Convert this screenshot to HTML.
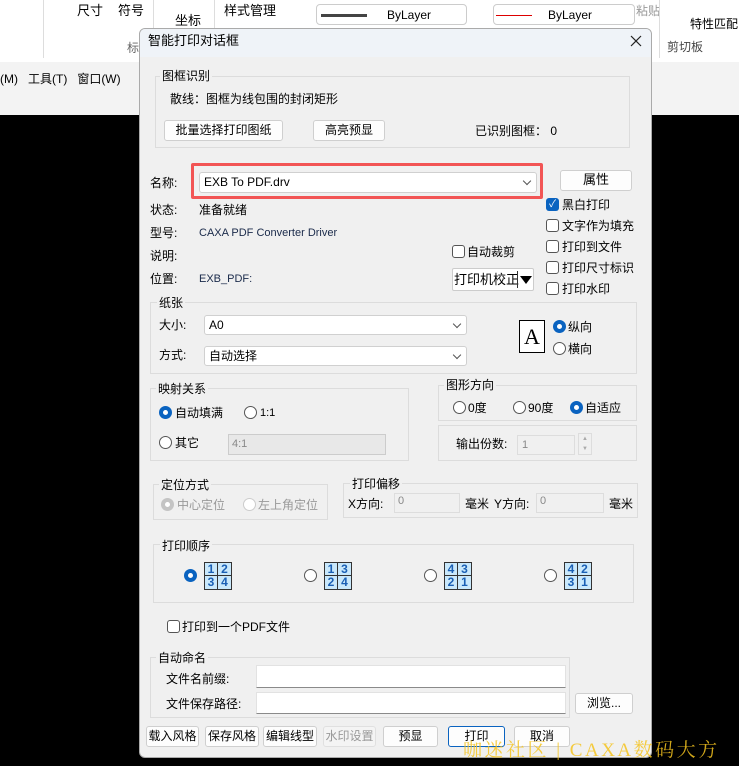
<!DOCTYPE html>
<html><head><meta charset="utf-8"><style>
*{box-sizing:border-box;margin:0;padding:0}
body{width:739px;height:766px;overflow:hidden;background:#000;font-family:"Liberation Sans","Noto Sans CJK SC",sans-serif;font-size:12px;color:#000;position:relative}
.a{position:absolute;white-space:nowrap}
.t{position:absolute;white-space:nowrap;line-height:14px}
.g{position:absolute;border:1px solid #dcdcdc}
.gl{position:absolute;background:#f0f0f0;padding:0 2px;line-height:14px;white-space:nowrap}
.btn{position:absolute;background:#fdfdfd;border:1px solid #cfcfcf;border-radius:3px;text-align:center;line-height:18px;font-size:12px}
.in{position:absolute;background:#fff;border:1px solid #e2e2e2;border-bottom:1px solid #8a8a8a}
.cb{position:absolute;width:13px;height:13px;border:1px solid #555;border-radius:3px;background:#fff}
.rd{position:absolute;width:13px;height:13px;border:1px solid #555;border-radius:50%;background:#fff}
.rd.on{border:4px solid #0a63c0}
.combo{position:absolute;background:#fff;border:1px solid #d0d0d0;border-radius:3px;padding-left:4px;line-height:18px}
.arr{position:absolute;right:6px;top:5px;width:6px;height:6px;border-right:1px solid #555;border-bottom:1px solid #555;transform:rotate(45deg)}
.ord{position:absolute;width:28px;height:28px;border:1px solid #333;background:#c9e8fb;display:grid;grid-template-columns:13px 13px;grid-template-rows:13px 13px;gap:0;color:#1a5fb4;font-weight:bold;font-size:12px;line-height:13px;text-align:center;overflow:hidden}
.ord span{border-right:1px solid #333;border-bottom:1px solid #333;display:block;height:13px}
.ord span:nth-child(2n){border-right:none}
.ord span:nth-child(n+3){border-bottom:none}
</style></head><body>
<div class="a" style="left:0;top:0;width:739px;height:62px;background:#fff"></div>
<div class="a" style="left:0;top:62px;width:739px;height:53px;background:#f3f3f3"></div>
<div class="t" style="left:0;top:72px">(M)&nbsp;&nbsp;&nbsp;工具(T)&nbsp;&nbsp;&nbsp;窗口(W)</div>
<div class="t" style="left:77px;top:4px;font-size:13px">尺寸</div>
<div class="t" style="left:118px;top:4px;font-size:13px">符号</div>
<div class="t" style="left:175px;top:14px;font-size:13px">坐标</div>
<div class="t" style="left:224px;top:4px;font-size:13px">样式管理</div>
<div class="t" style="left:127px;top:41px;color:#666">标</div>
<div class="a" style="left:43px;top:0;width:1px;height:58px;background:#ddd"></div>
<div class="a" style="left:153px;top:0;width:1px;height:58px;background:#ddd"></div>
<div class="a" style="left:214px;top:0;width:1px;height:58px;background:#ddd"></div>
<div class="a" style="left:316px;top:4px;width:151px;height:21px;border:1px solid #ccc;border-radius:4px;background:#fff"></div>
<div class="a" style="left:321px;top:14px;width:46px;height:3px;background:#444"></div>
<div class="t" style="left:387px;top:8px">ByLayer</div>
<div class="a" style="left:493px;top:4px;width:142px;height:21px;border:1px solid #ccc;border-radius:4px;background:#fff"></div>
<div class="a" style="left:496px;top:15px;width:36px;height:1px;background:#d00"></div>
<div class="t" style="left:548px;top:8px">ByLayer</div>
<div class="t" style="left:636px;top:4px;color:#999">粘贴</div>
<div class="t" style="left:690px;top:17px">特性匹配</div>
<div class="t" style="left:667px;top:40px;color:#444">剪切板</div>
<div class="a" style="left:659px;top:0;width:1px;height:58px;background:#ddd"></div>

<div class="a" style="left:139px;top:28px;width:513px;height:730px;background:#f0f0f0;border:1px solid #aaa;border-radius:6px;overflow:hidden">
  <div class="a" style="left:0;top:0;width:513px;height:28px;background:#eff3f8"></div>
</div>
<div class="t" style="left:148px;top:34px;font-size:13px">智能打印对话框</div>
<svg class="a" style="left:630px;top:35px" width="12" height="12" viewBox="0 0 12 12"><path d="M1 1L11 11M11 1L1 11" stroke="#222" stroke-width="1.2" fill="none"/></svg>

<div class="g" style="left:155px;top:76px;width:475px;height:72px"></div>
<div class="gl" style="left:160px;top:69px">图框识别</div>
<div class="t" style="left:170px;top:92px">散线：图框为线包围的封闭矩形</div>
<div class="btn" style="left:164px;top:120px;width:119px;height:21px">批量选择打印图纸</div>
<div class="btn" style="left:313px;top:120px;width:72px;height:21px">高亮预显</div>
<div class="t" style="left:475px;top:124px">已识别图框：&nbsp;0</div>

<div class="t" style="left:150px;top:176px">名称:</div>
<div class="a" style="left:191px;top:163px;width:352px;height:36px;border:3px solid #f25555;border-radius:2px"></div>
<div class="combo" style="left:199px;top:172px;width:338px;height:21px">EXB To PDF.drv<div class="arr"></div></div>
<div class="btn" style="left:560px;top:170px;width:72px;height:21px;font-size:13px">属性</div>

<div class="a" style="left:546px;top:198px;width:13px;height:13px;background:#0a63c0;border-radius:3px;color:#fff;font-size:10px;line-height:13px;text-align:center">✓</div>
<div class="t" style="left:562px;top:198px">黑白打印</div>
<div class="cb" style="left:546px;top:219px"></div><div class="t" style="left:562px;top:219px">文字作为填充</div>
<div class="cb" style="left:546px;top:240px"></div><div class="t" style="left:562px;top:240px">打印到文件</div>
<div class="cb" style="left:546px;top:261px"></div><div class="t" style="left:562px;top:261px">打印尺寸标识</div>
<div class="cb" style="left:546px;top:282px"></div><div class="t" style="left:562px;top:282px">打印水印</div>

<div class="t" style="left:150px;top:203px">状态:</div><div class="t" style="left:199px;top:203px">准备就绪</div>
<div class="t" style="left:150px;top:226px">型号:</div><div class="t" style="left:199px;top:226px;font-size:11px;color:#1a2a4a">CAXA PDF Converter Driver</div>
<div class="t" style="left:150px;top:249px">说明:</div>
<div class="t" style="left:150px;top:272px">位置:</div><div class="t" style="left:199px;top:272px;font-size:11px;color:#1a2a4a">EXB_PDF:</div>
<div class="cb" style="left:452px;top:245px"></div><div class="t" style="left:467px;top:245px">自动裁剪</div>
<div class="a" style="left:452px;top:268px;width:82px;height:23px;background:#fff;border:1px solid #ccc;border-radius:2px"></div>
<div class="t" style="left:454px;top:273px;font-size:13px">打印机校正</div>
<div class="a" style="left:517px;top:271px;width:1px;height:17px;background:#333"></div>
<div class="a" style="left:520px;top:276px;width:0;height:0;border-left:6px solid transparent;border-right:6px solid transparent;border-top:8px solid #000"></div>

<div class="g" style="left:150px;top:302px;width:487px;height:72px"></div>
<div class="gl" style="left:157px;top:296px">纸张</div>
<div class="t" style="left:159px;top:318px">大小:</div>
<div class="combo" style="left:204px;top:315px;width:263px;height:20px">A0<div class="arr"></div></div>
<div class="t" style="left:159px;top:348px">方式:</div>
<div class="combo" style="left:204px;top:346px;width:263px;height:20px">自动选择<div class="arr"></div></div>
<div class="a" style="left:519px;top:320px;width:26px;height:33px;background:#fff;border:1px solid #000;font-family:'Liberation Serif',serif;font-size:22px;line-height:31px;text-align:center">A</div>
<div class="rd on" style="left:553px;top:320px"></div><div class="t" style="left:568px;top:320px">纵向</div>
<div class="rd" style="left:553px;top:342px"></div><div class="t" style="left:568px;top:342px">横向</div>

<div class="g" style="left:150px;top:388px;width:259px;height:73px"></div>
<div class="gl" style="left:156px;top:382px">映射关系</div>
<div class="rd on" style="left:159px;top:406px"></div><div class="t" style="left:175px;top:406px">自动填满</div>
<div class="rd" style="left:244px;top:406px"></div><div class="t" style="left:260px;top:406px;font-size:11px">1:1</div>
<div class="rd" style="left:159px;top:436px"></div><div class="t" style="left:175px;top:436px">其它</div>
<div class="a" style="left:228px;top:434px;width:158px;height:21px;border:1px solid #ccc;background:#e8e8e8"></div>
<div class="t" style="left:232px;top:437px;color:#888;font-size:11px">4:1</div>

<div class="g" style="left:438px;top:385px;width:199px;height:36px"></div>
<div class="gl" style="left:444px;top:378px">图形方向</div>
<div class="rd" style="left:453px;top:401px"></div><div class="t" style="left:468px;top:401px">0度</div>
<div class="rd" style="left:513px;top:401px"></div><div class="t" style="left:528px;top:401px">90度</div>
<div class="rd on" style="left:570px;top:401px"></div><div class="t" style="left:585px;top:401px">自适应</div>
<div class="g" style="left:438px;top:425px;width:199px;height:36px"></div>
<div class="t" style="left:456px;top:437px">输出份数:</div>
<div class="a" style="left:517px;top:435px;width:58px;height:20px;border:1px solid #ddd;background:#f0f0f0;color:#888;padding-left:4px;line-height:18px;font-size:11px">1</div>
<div class="a" style="left:578px;top:433px;width:14px;height:22px;border:1px solid #ddd;font-size:6px;color:#aaa;text-align:center;line-height:10px">▲<br>▼</div>

<div class="g" style="left:153px;top:484px;width:175px;height:36px"></div>
<div class="gl" style="left:159px;top:478px">定位方式</div>
<div class="rd" style="left:161px;top:498px;border:4px solid #c4c4c4"></div><div class="t" style="left:177px;top:498px;color:#999">中心定位</div>
<div class="rd" style="left:243px;top:498px;border-color:#ccc"></div><div class="t" style="left:258px;top:498px;color:#999">左上角定位</div>
<div class="g" style="left:343px;top:483px;width:295px;height:35px"></div>
<div class="gl" style="left:350px;top:477px">打印偏移</div>
<div class="t" style="left:348px;top:497px">X方向:</div>
<div class="a" style="left:394px;top:493px;width:66px;height:20px;border:1px solid #ddd;color:#888;padding-left:3px;font-size:11px;line-height:14px">0</div>
<div class="t" style="left:465px;top:497px">毫米</div>
<div class="t" style="left:494px;top:497px">Y方向:</div>
<div class="a" style="left:536px;top:493px;width:68px;height:20px;border:1px solid #ddd;color:#888;padding-left:3px;font-size:11px;line-height:14px">0</div>
<div class="t" style="left:609px;top:497px">毫米</div>

<div class="g" style="left:153px;top:544px;width:481px;height:59px"></div>
<div class="gl" style="left:160px;top:539px">打印顺序</div>
<div class="rd on" style="left:184px;top:569px"></div>
<div class="ord" style="left:204px;top:562px"><span>1</span><span>2</span><span>3</span><span>4</span></div>
<div class="rd" style="left:304px;top:569px"></div>
<div class="ord" style="left:324px;top:562px"><span>1</span><span>3</span><span>2</span><span>4</span></div>
<div class="rd" style="left:424px;top:569px"></div>
<div class="ord" style="left:444px;top:562px"><span>4</span><span>3</span><span>2</span><span>1</span></div>
<div class="rd" style="left:544px;top:569px"></div>
<div class="ord" style="left:564px;top:562px"><span>4</span><span>2</span><span>3</span><span>1</span></div>

<div class="cb" style="left:167px;top:620px"></div><div class="t" style="left:182px;top:620px">打印到一个PDF文件</div>

<div class="g" style="left:150px;top:657px;width:420px;height:61px"></div>
<div class="gl" style="left:156px;top:651px">自动命名</div>
<div class="t" style="left:166px;top:672px">文件名前缀:</div>
<div class="in" style="left:256px;top:665px;width:310px;height:23px"></div>
<div class="t" style="left:166px;top:697px">文件保存路径:</div>
<div class="in" style="left:256px;top:692px;width:310px;height:22px"></div>
<div class="btn" style="left:575px;top:693px;width:58px;height:21px">浏览...</div>

<div class="btn" style="left:146px;top:726px;width:53px;height:21px">载入风格</div>
<div class="btn" style="left:205px;top:726px;width:54px;height:21px">保存风格</div>
<div class="btn" style="left:263px;top:726px;width:54px;height:21px">编辑线型</div>
<div class="btn" style="left:323px;top:726px;width:53px;height:21px;color:#999;background:#f4f4f4;border-color:#e0e0e0">水印设置</div>
<div class="btn" style="left:383px;top:726px;width:55px;height:21px">预显</div>
<div class="btn" style="left:448px;top:726px;width:57px;height:21px;border:1px solid #0a63c0">打印</div>
<div class="btn" style="left:514px;top:726px;width:56px;height:21px">取消</div>

<div class="t" style="left:463px;top:739px;font-size:19px;line-height:24px;color:rgba(245,195,30,0.85);font-family:'Liberation Serif','Noto Serif CJK SC',serif;letter-spacing:2.5px">咖迷社区 | CAXA数码大方</div>
</body></html>
